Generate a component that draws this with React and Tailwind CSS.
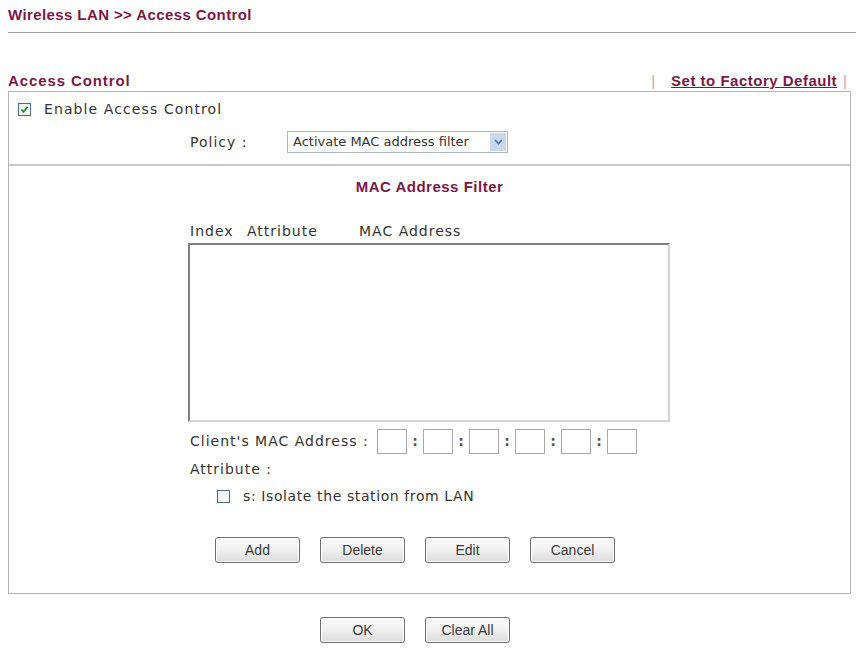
import React from "react";

const maroon = "text-[#7d1747]";

function Btn({ children, w = "w-[85px]" }) {
  return (
    <button
      className={`${w} h-[26px] rounded-[3px] border border-[#6f6f6f] bg-gradient-to-b from-[#fbfbfb] via-[#f0f0f0] to-[#dcdcdc] text-[14px] text-[#3a3a3a] shadow-[inset_0_0_0_1px_#fff]`}
      style={{ fontFamily: '"Liberation Sans", Arial, sans-serif' }}
    >
      {children}
    </button>
  );
}

function Check({ checked }) {
  return (
    <span className="inline-flex h-[13px] w-[13px] items-center justify-center border border-[#4f6b8a] bg-gradient-to-br from-[#e3efe3] to-[#ffffff]">
      {checked && (
        <svg width="9" height="9" viewBox="0 0 9 9">
          <path d="M1.5 4.5 L3.5 6.8 L7.6 1.8" fill="none" stroke="#2a8a2a" strokeWidth="1.8" />
        </svg>
      )}
    </span>
  );
}

function MacBox() {
  return <span className="inline-block h-[25px] w-[30px] border border-[#a9a9a9] bg-white" />;
}

function Colon() {
  return <span className="w-[16px] text-center font-bold tracking-normal text-[#555]">:</span>;
}

export default function App() {
  const body = { fontFamily: '"DejaVu Sans", Verdana, sans-serif' };
  const head = { fontFamily: '"Liberation Sans", Arial, sans-serif' };
  return (
    <div className="h-[648px] w-[856px] bg-white text-[#333]" style={body}>
      <div className="pl-[8px] pt-[6px]">
        <div className={`text-[15px] font-bold leading-[17px] tracking-[0.4px] ${maroon}`} style={head}>
          Wireless LAN &gt;&gt; Access Control
        </div>
        <div className="mt-[9px] h-[1px] bg-[#a0a0a0]" />
        <div className="mt-[39px] flex w-[842px] items-end justify-between" style={head}>
          <span className={`text-[15px] font-bold leading-[17px] tracking-[0.9px] ${maroon}`}>Access Control</span>
          <span className="flex items-center text-[15px] leading-[17px]">
            <span className="mr-[16px] text-[#c7a0b4]">|</span>
            <span className={`font-bold tracking-[0.5px] underline ${maroon}`}>Set to Factory Default</span>
            <span className="ml-[6px] mr-[3px] text-[#c7a0b4]">|</span>
          </span>
        </div>
        <div className="mt-[2px] w-[843px] border border-[#b5b5b5] bg-white">
          <div className="flex items-center pl-[9px] pt-[7px] text-[14px] tracking-[1.1px]">
            <Check checked />
            <span className="ml-[13px]">Enable Access Control</span>
          </div>
          <div className="flex items-center pb-[11px] pl-[181px] pt-[11px] text-[14px] tracking-[1px]">
            <span className="w-[97px]">Policy :</span>
            <span className="flex h-[22px] w-[221px] items-center justify-between border border-[#a7b5c7] bg-white pl-[5px] pr-[1px] tracking-normal">
              <span className="text-[13px]" style={{ fontFamily: '"DejaVu Sans", Tahoma, sans-serif' }}>Activate MAC address filter</span>
              <span className="flex h-[18px] w-[16px] items-center justify-center bg-[#c6d7ef]">
                <svg width="9" height="6" viewBox="0 0 9 6">
                  <path d="M1 1 L4.5 4.5 L8 1" fill="none" stroke="#4d6fa8" strokeWidth="1.6" />
                </svg>
              </span>
            </span>
          </div>
          <div className="h-[2px] bg-[#c8c8c8]" />
          <div className={`pt-[12px] text-center text-[15px] font-bold leading-[17px] tracking-[0.5px] ${maroon}`} style={head}>
            MAC Address Filter
          </div>
          <div className="pl-[179px]">
            <div className="mt-[28px] flex pl-[2px] text-[14px] leading-[16px] tracking-[1px]">
              <span className="w-[57px]">Index</span>
              <span className="w-[112px]">Attribute</span>
              <span>MAC Address</span>
            </div>
            <div className="mt-[4px] h-[179px] w-[482px] border-2 border-b-[#d4d4d4] border-l-[#808080] border-r-[#d4d4d4] border-t-[#808080] bg-white" />
            <div className="mt-[7px] flex items-center pl-[2px] text-[14px] tracking-[1px]">
              <span className="w-[187px]">Client's MAC Address :</span>
              <MacBox />
              <Colon />
              <MacBox />
              <Colon />
              <MacBox />
              <Colon />
              <MacBox />
              <Colon />
              <MacBox />
              <Colon />
              <MacBox />
            </div>
            <div className="mt-[7px] pl-[2px] text-[14px] leading-[16px] tracking-[1px]">Attribute :</div>
            <div className="mt-[9px] flex items-center pl-[29px] text-[14px] tracking-[0.6px]">
              <Check />
              <span className="ml-[13px]">s: Isolate the station from LAN</span>
            </div>
          </div>
          <div className="mt-[30px] flex gap-[20px] pb-[30px] pl-[206px]">
            <Btn>Add</Btn>
            <Btn>Delete</Btn>
            <Btn>Edit</Btn>
            <Btn>Cancel</Btn>
          </div>
        </div>
        <div className="mt-[23px] flex gap-[20px] pl-[312px]">
          <Btn>OK</Btn>
          <Btn>Clear All</Btn>
        </div>
      </div>
    </div>
  );
}
